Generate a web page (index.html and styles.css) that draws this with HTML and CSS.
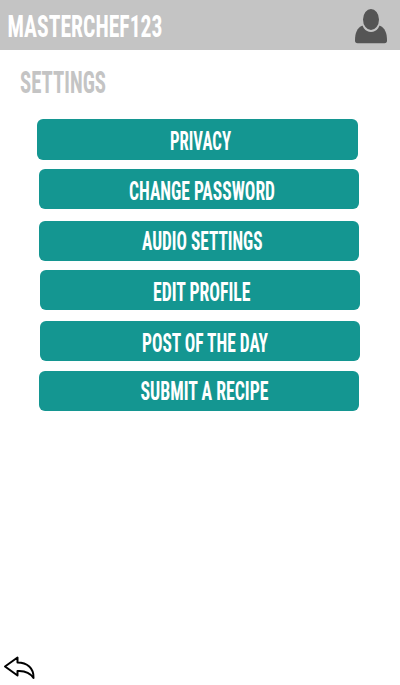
FILE: index.html
```html
<!DOCTYPE html>
<html lang="en">
<head>
<meta charset="utf-8">
<title>Settings</title>
<link rel="stylesheet" href="styles.css">
</head>
<body>
<div class="screen">
  <header class="topbar">
    <svg class="username" width="170" height="50"><text x="7.5" y="37.3" textLength="155" lengthAdjust="spacingAndGlyphs">MASTERCHEF123</text></svg>
    <svg class="avatar" width="34" height="36" viewBox="0 0 34 36">
      <path d="M8.5 17.5C3 20 1 25 1 32.500Q1 35.300 3.500 35.300H30.500Q33 35.300 33 32.500C33 25 31 20 25.500 17.500Z"/>
      <ellipse class="head" cx="17" cy="11.500" rx="9" ry="11.500"/>
    </svg>
  </header>
  <main class="content">
    <h1 class="heading"><svg width="120" height="50"><text x="20" y="42.5" textLength="86" lengthAdjust="spacingAndGlyphs">SETTINGS</text></svg></h1>
    <nav class="menu">
      <button class="item privacy"><svg width="320" height="41"><text x="133" y="31" textLength="61" lengthAdjust="spacingAndGlyphs">PRIVACY</text></svg></button>
      <button class="item password"><svg width="320" height="40"><text x="90" y="30.5" textLength="146" lengthAdjust="spacingAndGlyphs">CHANGE PASSWORD</text></svg></button>
      <button class="item audio"><svg width="320" height="40"><text x="103" y="28.7" textLength="120.5" lengthAdjust="spacingAndGlyphs">AUDIO SETTINGS</text></svg></button>
      <button class="item profile"><svg width="320" height="40"><text x="113" y="30.7" textLength="97.5" lengthAdjust="spacingAndGlyphs">EDIT PROFILE</text></svg></button>
      <button class="item post"><svg width="320" height="40"><text x="102" y="30.7" textLength="126" lengthAdjust="spacingAndGlyphs">POST OF THE DAY</text></svg></button>
      <button class="item recipe"><svg width="320" height="40"><text x="101.5" y="28.7" textLength="128" lengthAdjust="spacingAndGlyphs">SUBMIT A RECIPE</text></svg></button>
    </nav>
  </main>
  <footer class="footer">
    <svg class="back" width="34" height="28" viewBox="0 0 34 28">
      <path d="M2 12.5L14.5 3.500V8.5C24 8.5 31 14 30.5 24C27 18.5 22 16.5 14.5 17V21.5Z"/>
    </svg>
  </footer>
</div>
</body>
</html>
```

FILE: styles.css
```css
body {
  margin: 0;
  background: #fff;
  font-family: "Liberation Sans Narrow", "Roboto Condensed", Roboto, sans-serif;
  font-weight: 700;
}

.screen {
  display: flex;
  flex-direction: column;
  height: 685px;
}

svg {
  display: block;
  overflow: visible;
}

.topbar {
  display: flex;
  justify-content: space-between;
  height: 50px;
  background: #c4c4c4;
}

.username {
  font-size: 30.5px;
  fill: #fff;
}

.avatar {
  margin: 8px 12px 0 0;
  fill: #555;
}

.head {
  stroke: #c4c4c4;
  stroke-width: 2;
}

.content {
  flex: 1;
}

.heading {
  margin: 0;
  height: 69px;
  font-size: 30.5px;
  fill: #c4c4c4;
}

.menu {
  display: flex;
  flex-direction: column;
  align-items: flex-start;
}

.item {
  width: 320px;
  height: 40px;
  margin: 0 0 0 39px;
  padding: 0;
  border: 0;
  border-radius: 6px;
  background: #149691;
  fill: #fff;
  font: inherit;
  font-size: 26px;
}

.privacy {
  width: 321px;
  height: 41px;
  margin-left: 37px;
}

.password {
  margin-top: 9px;
}

.audio {
  margin-top: 12px;
}

.profile {
  margin: 9px 0 0 40px;
}

.post {
  margin: 11px 0 0 40px;
}

.recipe {
  margin-top: 10px;
}

.footer {
  height: 31px;
  padding-left: 3px;
}

.back {
  fill: #fff;
  stroke: #000;
  stroke-width: 2;
  stroke-linejoin: round;
}
```
